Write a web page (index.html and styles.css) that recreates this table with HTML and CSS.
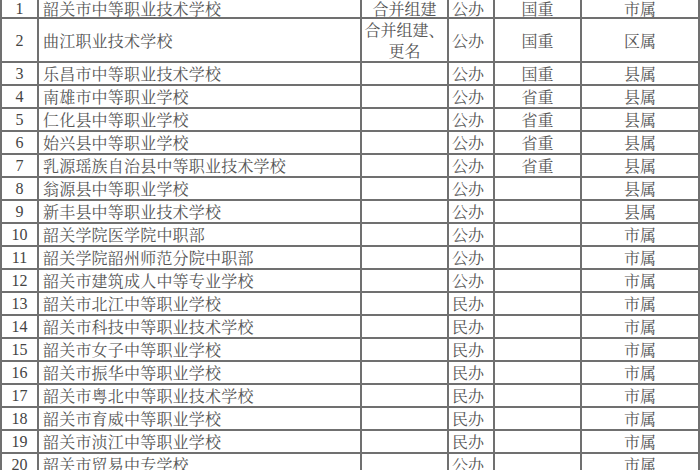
FILE: index.html
```html
<!DOCTYPE html>
<html lang="zh">
<head>
<meta charset="utf-8">
<link rel="stylesheet" href="styles.css">
</head>
<body>
<table class="sheet">
<colgroup>
<col class="c-no"><col class="c-name"><col class="c-note"><col class="c-type"><col class="c-level"><col class="c-own">
</colgroup>
<tbody>
<tr class="first"><td class="no">1</td><td class="name">韶关市中等职业技术学校</td><td class="note">合并组建</td><td class="type">公办</td><td class="level">国重</td><td class="own">市属</td></tr>
<tr class="tall"><td class="no">2</td><td class="name">曲江职业技术学校</td><td class="note">合并组建、<br>更名</td><td class="type">公办</td><td class="level">国重</td><td class="own">区属</td></tr>
<tr><td class="no">3</td><td class="name">乐昌市中等职业技术学校</td><td class="note"></td><td class="type">公办</td><td class="level">国重</td><td class="own">县属</td></tr>
<tr><td class="no">4</td><td class="name">南雄市中等职业学校</td><td class="note"></td><td class="type">公办</td><td class="level">省重</td><td class="own">县属</td></tr>
<tr><td class="no">5</td><td class="name">仁化县中等职业学校</td><td class="note"></td><td class="type">公办</td><td class="level">省重</td><td class="own">县属</td></tr>
<tr><td class="no">6</td><td class="name">始兴县中等职业学校</td><td class="note"></td><td class="type">公办</td><td class="level">省重</td><td class="own">县属</td></tr>
<tr><td class="no">7</td><td class="name">乳源瑶族自治县中等职业技术学校</td><td class="note"></td><td class="type">公办</td><td class="level">省重</td><td class="own">县属</td></tr>
<tr><td class="no">8</td><td class="name">翁源县中等职业学校</td><td class="note"></td><td class="type">公办</td><td class="level"></td><td class="own">县属</td></tr>
<tr><td class="no">9</td><td class="name">新丰县中等职业技术学校</td><td class="note"></td><td class="type">公办</td><td class="level"></td><td class="own">县属</td></tr>
<tr><td class="no">10</td><td class="name">韶关学院医学院中职部</td><td class="note"></td><td class="type">公办</td><td class="level"></td><td class="own">市属</td></tr>
<tr><td class="no">11</td><td class="name">韶关学院韶州师范分院中职部</td><td class="note"></td><td class="type">公办</td><td class="level"></td><td class="own">市属</td></tr>
<tr><td class="no">12</td><td class="name">韶关市建筑成人中等专业学校</td><td class="note"></td><td class="type">公办</td><td class="level"></td><td class="own">市属</td></tr>
<tr><td class="no">13</td><td class="name">韶关市北江中等职业学校</td><td class="note"></td><td class="type">民办</td><td class="level"></td><td class="own">市属</td></tr>
<tr><td class="no">14</td><td class="name">韶关市科技中等职业技术学校</td><td class="note"></td><td class="type">民办</td><td class="level"></td><td class="own">市属</td></tr>
<tr><td class="no">15</td><td class="name">韶关市女子中等职业学校</td><td class="note"></td><td class="type">民办</td><td class="level"></td><td class="own">市属</td></tr>
<tr><td class="no">16</td><td class="name">韶关市振华中等职业学校</td><td class="note"></td><td class="type">民办</td><td class="level"></td><td class="own">市属</td></tr>
<tr><td class="no">17</td><td class="name">韶关市粤北中等职业技术学校</td><td class="note"></td><td class="type">民办</td><td class="level"></td><td class="own">市属</td></tr>
<tr><td class="no">18</td><td class="name">韶关市育威中等职业学校</td><td class="note"></td><td class="type">民办</td><td class="level"></td><td class="own">市属</td></tr>
<tr><td class="no">19</td><td class="name">韶关市浈江中等职业学校</td><td class="note"></td><td class="type">民办</td><td class="level"></td><td class="own">市属</td></tr>
<tr><td class="no">20</td><td class="name">韶关市贸易中专学校</td><td class="note"></td><td class="type">公办</td><td class="level"></td><td class="own">市属</td></tr>
</tbody>
</table>
</body>
</html>
```
FILE: styles.css
```css
html, body {
  margin: 0;
  padding: 0;
  background: #ffffff;
  overflow: hidden;
}
body {
  font-family: "Noto Serif CJK SC", "Noto Sans CJK SC", serif;
  color: #555555;
}
.sheet {
  border-collapse: collapse;
  table-layout: fixed;
  width: 698px;
}
.c-no { width: 37px; }
.c-name { width: 323px; }
.c-note { width: 87px; }
.c-type { width: 46px; }
.c-level { width: 87px; }
.c-own { width: 118px; }
.sheet td {
  border: 2px solid #707070;
  height: 21px;
  padding: 0;
  font-size: 16px;
  line-height: 19px;
  white-space: nowrap;
  vertical-align: middle;
}
.sheet tr.first td {
  border-top: none;
  height: 17px;
  line-height: 17px;
}
.sheet tr.tall td {
  height: 40px;
}
.sheet td.no {
  font-family: "Liberation Serif", serif;
  font-size: 16px;
  text-align: center;
  color: #444444;
}
.sheet td.name {
  padding-left: 4px;
  letter-spacing: 0.2px;
}
.sheet td.note {
  text-align: center;
  line-height: 21px;
}
.sheet tr.first td.note {
  line-height: 17px;
}
.sheet td.type {
  padding-left: 3px;
}
.sheet td.level,
.sheet td.own {
  text-align: center;
}
```
